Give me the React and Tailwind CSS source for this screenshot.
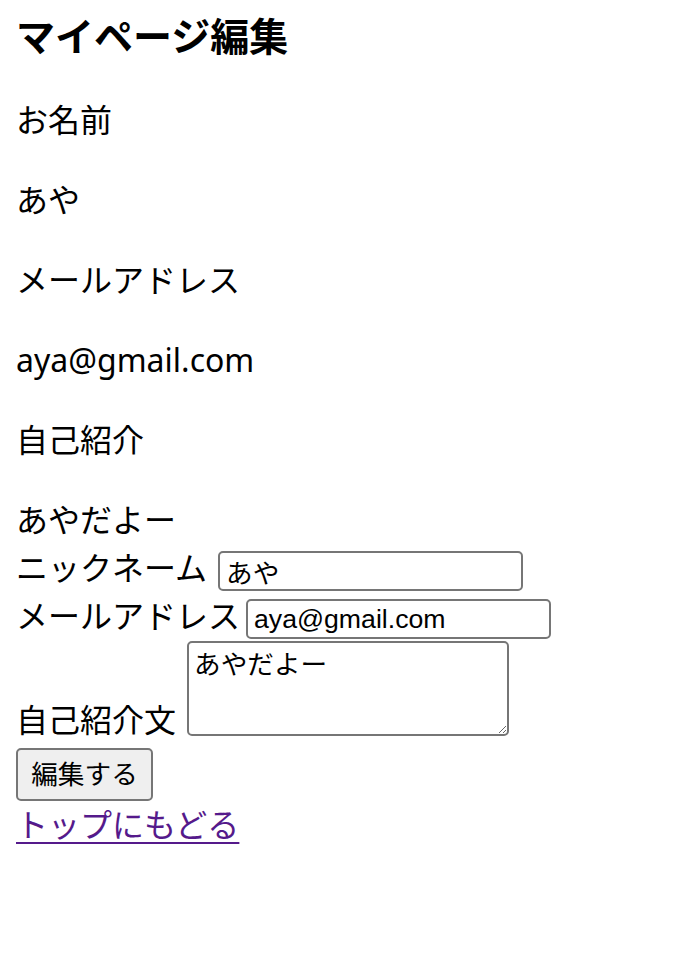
import React from 'react';

const Profile = () => {
  const items = ['お名前', 'あや', 'メールアドレス', 'aya@gmail.com', '自己紹介', 'あやだよー'];

  return (
    <div className="min-h-screen bg-white px-4 pt-[12px] text-black font-['Noto_Sans','Noto_Sans_CJK_JP',sans-serif]">
      <h1 className="text-[39px] font-bold leading-[48px]">マイページ編集</h1>

      <div className="mt-[36px] flex flex-col gap-[32px] text-[32px] leading-[48px]">
        {items.map((t) => (
          <p key={t}>{t}</p>
        ))}
      </div>

      <form className="text-[32px] leading-[48px]" onSubmit={(e) => e.preventDefault()}>
        <div className="flex h-[48px] items-center">
          <span className="w-[202px] shrink-0">ニックネーム</span>
          <input
            defaultValue="あや"
            className="mb-[1px] h-[40px] w-[305px] self-end rounded-[5px] border-2 border-[#767676] px-[6px] text-[26.67px] leading-none font-['Liberation_Sans','Noto_Sans_CJK_JP',sans-serif]"
          />
        </div>
        <div className="flex h-[48px] items-center">
          <span className="w-[230px] shrink-0">メールアドレス</span>
          <input
            defaultValue="aya@gmail.com"
            className="mb-[1px] h-[40px] w-[305px] self-end rounded-[5px] border-2 border-[#767676] px-[6px] text-[26.67px] leading-none font-['Liberation_Sans','Noto_Sans_CJK_JP',sans-serif]"
          />
        </div>
        <div className="mt-[1px] flex items-end">
          <span className="w-[171px] shrink-0 leading-[32px]">自己紹介文</span>
          <textarea
            defaultValue="あやだよー"
            className="h-[95px] w-[322px] resize rounded-[5px] border-2 border-[#767676] px-[5px] py-[4px] text-[26.67px] leading-[36px] font-['Liberation_Sans','Noto_Sans_CJK_JP',sans-serif]"
          />
        </div>
        <button
          type="submit"
          className="mt-[12px] block h-[53px] w-[137px] rounded-[5px] border-2 border-[#767676] bg-[#efefef] text-[26.67px] leading-none"
        >
          編集する
        </button>
      </form>

      <a href="#" className="block w-fit text-[32px] leading-[48px] text-[#551a8b] underline decoration-2 underline-offset-[5px]">
        トップにもどる
      </a>
    </div>
  );
};

export default function App() {
  return <Profile />;
}
